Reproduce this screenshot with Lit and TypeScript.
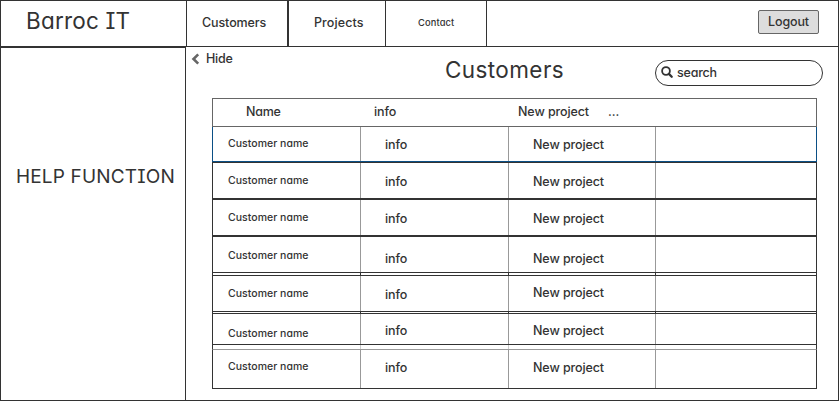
import { LitElement, html, css } from "lit";

interface CustomerRow {
  height: number;
  gapAfter: number;
  kind: string;
  gapKind?: string;
  // padding above the name, info and project labels
  drops: [number, number, number];
}

const rows: CustomerRow[] = [
  { height: 35, gapAfter: 0, kind: "selected", drops: [9, 10, 10] },
  { height: 37, gapAfter: 0, kind: "", drops: [10, 11, 11] },
  { height: 37, gapAfter: 0, kind: "", drops: [10, 11, 11] },
  { height: 37, gapAfter: 2, kind: "", gapKind: "dark", drops: [11, 14, 14] },
  { height: 37, gapAfter: 1, kind: "", gapKind: "dark", drops: [10, 11, 9] },
  { height: 32, gapAfter: 4, kind: "", gapKind: "light", drops: [12, 9, 9] },
  { height: 40, gapAfter: 0, kind: "last", drops: [9, 10, 10] },
];

class CustomerTable extends LitElement {
  static styles = css`
    :host { display: block; font-size: 12.5px; line-height: 16px; letter-spacing: -0.1px; }
    .head {
      box-sizing: border-box; height: 29px; border: 1px solid #666;
      display: flex; padding-top: 5px;
    }
    .h-name { width: 128px; padding-left: 33px; letter-spacing: -0.25px; }
    .h-info { width: 144px; }
    .h-project { width: 90px; }
    .row, .gap { box-sizing: border-box; display: grid; grid-template-columns: 148px 148px 147px 1fr; }
    .row { border: 1px solid #333; }
    .selected { border-color: #0b4f85; border-top: 0; }
    .last { border-top-color: #999; }
    .gap { border: solid #333; border-width: 0 1px; }
    .cell { box-sizing: border-box; border-right: 1px solid #999; padding-left: 24px; }
    .cell:last-child { border-right: 0; }
    .name { padding-left: 15px; font-size: 10.5px; letter-spacing: 0.03px; }
    .dark .cell { border-color: #333; }
    .light .cell { border-color: #ccc; }
  `;

  render() {
    return html`
      <div class="head">
        <div class="h-name">Name</div>
        <div class="h-info">info</div>
        <div class="h-project">New project</div>
        <div>...</div>
      </div>
      ${rows.map(
        (r) => html`
          <div class="row ${r.kind}" style="height:${r.height}px">
            <div class="cell name" style="padding-top:${r.drops[0]}px">Customer name</div>
            <div class="cell" style="padding-top:${r.drops[1]}px">info</div>
            <div class="cell" style="padding-top:${r.drops[2]}px">New project</div>
            <div class="cell"></div>
          </div>
          ${r.gapAfter
            ? html`<div class="gap ${r.gapKind}" style="height:${r.gapAfter}px">
                <div class="cell"></div><div class="cell"></div><div class="cell"></div><div class="cell"></div>
              </div>`
            : ""}
        `
      )}
    `;
  }
}
customElements.define("customer-table", CustomerTable);

class AppRoot extends LitElement {
  static styles = css`
    :host {
      display: flex; flex-direction: column; box-sizing: border-box;
      width: 839px; height: 401px; border: 1px solid #333; background: #fff;
      font-family: Inter, "Noto Sans", sans-serif; font-size: 12.5px; line-height: 16px; font-weight: 500;
      color: #333; font-feature-settings: "cv11", "cv08"; white-space: nowrap;
    }
    header { display: flex; height: 45px; flex: none; border-bottom: 1px solid #333; }
    .brand {
      box-sizing: border-box; width: 186px; border-right: 1px solid #333;
      padding: 6px 0 0 25px; font-size: 22.5px; line-height: 28px; font-weight: 400; letter-spacing: 0.2px;
    }
    .tab { box-sizing: border-box; border-right: 1px solid #333; padding-top: 14px; }
    .customers { width: 102px; border-right-width: 2px; padding-left: 15px; letter-spacing: -0.1px; }
    .projects { width: 97px; padding-left: 25px; letter-spacing: 0.1px; }
    .contact { width: 101px; padding-left: 32px; font-size: 9.3px; letter-spacing: 0.15px; }
    .logout {
      box-sizing: border-box; width: 61px; height: 24px; margin: 9px 19px 0 auto; padding: 0 0 1px;
      border: 1px solid #666; border-radius: 2px; background: #ddd; color: inherit;
      font: inherit; font-feature-settings: inherit; letter-spacing: -0.12px;
    }
    .body { display: flex; flex: 1; min-height: 0; }
    aside {
      box-sizing: border-box; width: 185px; border-top: 1px solid #333; border-right: 1px solid #333;
      padding: 117px 0 0 15px; font-size: 19px; line-height: 24px; font-weight: 400; letter-spacing: 0.16px;
    }
    main { flex: 1; }
    .top { display: flex; height: 51px; }
    .hide { display: flex; width: 259px; padding: 4px 0 0 5px; box-sizing: border-box; letter-spacing: -0.25px; }
    .hide svg { width: 9px; height: 12px; margin: 2px 6px 0 0; }
    h1 { margin: 0; padding-top: 9px; font-size: 22.5px; line-height: 28px; font-weight: 400; letter-spacing: 0.4px; width: 210px; }
    .search {
      box-sizing: border-box; display: flex; width: 168px; height: 26px; margin-top: 13px;
      border: 1px solid #333; border-radius: 13px; padding: 4px 0 0 5px; letter-spacing: -0.2px;
    }
    .search svg { width: 12px; height: 12px; margin: 1px 4px 0 0; }
    customer-table { margin-left: 26px; width: 605px; }
  `;

  render() {
    return html`
      <header>
        <div class="brand">Barroc IT</div>
        <div class="tab customers">Customers</div>
        <div class="tab projects">Projects</div>
        <div class="tab contact">Contact</div>
        <button class="logout">Logout</button>
      </header>
      <div class="body">
        <aside>HELP FUNCTION</aside>
        <main>
          <div class="top">
            <div class="hide">
              <svg viewBox="0 0 9 12"><path d="M7.2 1.4 2.5 6l4.7 4.6" fill="none" stroke="#666" stroke-width="2.6" /></svg>
              <span>Hide</span>
            </div>
            <h1>Customers</h1>
            <div class="search">
              <svg viewBox="0 0 12 12" fill="none" stroke="#333">
                <circle cx="5" cy="5" r="3.9" stroke-width="1.8" />
                <path d="m7.9 7.9 2.8 2.8" stroke-width="2.3" stroke-linecap="round" />
              </svg>
              <span>search</span>
            </div>
          </div>
          <customer-table></customer-table>
        </main>
      </div>
    `;
  }
}
customElements.define("app-root", AppRoot);
